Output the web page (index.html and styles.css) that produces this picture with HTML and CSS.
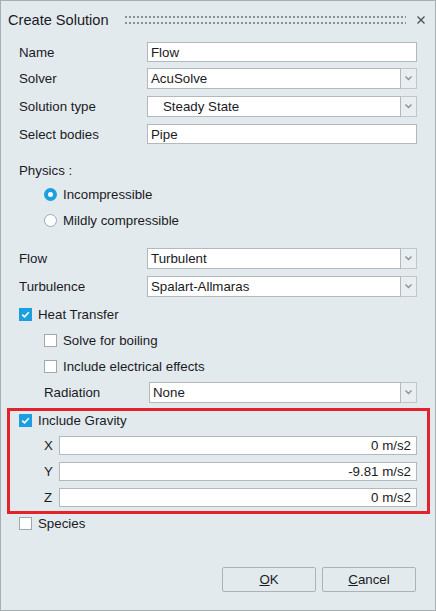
FILE: index.html
```html
<!DOCTYPE html>
<html>
<head>
<meta charset="utf-8">
<link rel="stylesheet" href="styles.css">
</head>
<body>
<div class="window">
  <div class="titlebar">
    <span class="title">Create Solution</span>
    <span class="grip"></span>
    <span class="close">
      <svg width="10" height="10" viewBox="0 0 10 10"><path d="M1.5 1.5 L8.5 8.5 M8.5 1.5 L1.5 8.5" stroke="#4a4f55" stroke-width="1.3" fill="none"/></svg>
    </span>
  </div>
  <div class="body">
    <div class="row r-name"><span class="lbl">Name</span><div class="input">Flow</div></div>
    <div class="row r-solver"><span class="lbl">Solver</span><div class="select"><div class="sel-main">AcuSolve</div><div class="sel-btn"><svg width="7" height="5" viewBox="0 0 7 5"><path d="M0.5 0.5 L3.5 3.5 L6.5 0.5" stroke="#8c9196" stroke-width="1.4" fill="none"/></svg></div></div></div>
    <div class="row r-type"><span class="lbl">Solution type</span><div class="select"><div class="sel-main indent">Steady State</div><div class="sel-btn"><svg width="7" height="5" viewBox="0 0 7 5"><path d="M0.5 0.5 L3.5 3.5 L6.5 0.5" stroke="#8c9196" stroke-width="1.4" fill="none"/></svg></div></div></div>
    <div class="row r-bodies"><span class="lbl">Select bodies</span><div class="input">Pipe</div></div>

    <div class="plain r-physics">Physics :</div>
    <div class="choice r-radio1"><span class="radio on"></span>Incompressible</div>
    <div class="choice r-radio2"><span class="radio"></span>Mildly compressible</div>

    <div class="row r-flow"><span class="lbl">Flow</span><div class="select"><div class="sel-main">Turbulent</div><div class="sel-btn"><svg width="7" height="5" viewBox="0 0 7 5"><path d="M0.5 0.5 L3.5 3.5 L6.5 0.5" stroke="#8c9196" stroke-width="1.4" fill="none"/></svg></div></div></div>
    <div class="row r-turb"><span class="lbl">Turbulence</span><div class="select"><div class="sel-main">Spalart-Allmaras</div><div class="sel-btn"><svg width="7" height="5" viewBox="0 0 7 5"><path d="M0.5 0.5 L3.5 3.5 L6.5 0.5" stroke="#8c9196" stroke-width="1.4" fill="none"/></svg></div></div></div>

    <div class="check r-heat"><span class="box on"><svg width="13" height="13" viewBox="0 0 13 13"><path d="M3.2 6.6 L5.5 8.8 L9.8 4.2" stroke="#fff" stroke-width="1.6" fill="none"/></svg></span>Heat Transfer</div>
    <div class="check sub r-boil"><span class="box"></span>Solve for boiling</div>
    <div class="check sub r-elec"><span class="box"></span>Include electrical effects</div>
    <div class="row sub r-rad"><span class="lbl rad-lbl">Radiation</span><div class="select"><div class="sel-main">None</div><div class="sel-btn"><svg width="7" height="5" viewBox="0 0 7 5"><path d="M0.5 0.5 L3.5 3.5 L6.5 0.5" stroke="#8c9196" stroke-width="1.4" fill="none"/></svg></div></div></div>

    <div class="highlight">
      <div class="check r-grav"><span class="box on"><svg width="13" height="13" viewBox="0 0 13 13"><path d="M3.2 6.6 L5.5 8.8 L9.8 4.2" stroke="#fff" stroke-width="1.6" fill="none"/></svg></span>Include Gravity</div>
      <div class="vrow r-x"><span class="vlbl">X</span><div class="input num">0 m/s2</div></div>
      <div class="vrow r-y"><span class="vlbl">Y</span><div class="input num">-9.81 m/s2</div></div>
      <div class="vrow r-z"><span class="vlbl">Z</span><div class="input num">0 m/s2</div></div>
    </div>

    <div class="check r-species"><span class="box"></span>Species</div>

    <div class="buttons">
      <button class="btn"><u>O</u>K</button>
      <button class="btn"><u>C</u>ancel</button>
    </div>
  </div>
</div>
</body>
</html>
```
FILE: styles.css
```css
html, body {
  margin: 0;
  padding: 0;
  background: #e3eaee;
}
.window {
  box-sizing: border-box;
  width: 436px;
  height: 611px;
  border: 1px solid #a9aeb3;
  background: #e3eaee;
  font-family: "Liberation Sans", Arial, sans-serif;
  font-size: 13.3px;
  color: #1a1a24;
}
.titlebar {
  height: 36px;
  display: flex;
  align-items: center;
  padding: 0 8px 0 7px;
}
.title {
  font-size: 14.6px;
  margin-top: 2px;
}
.grip {
  flex: 1;
  height: 12px;
  margin: 1px 10px 0 15px;
  background-image: radial-gradient(circle, #8b9095 0.95px, transparent 1.25px);
  background-size: 4px 6px;
  background-position: 0 0;
}
.close {
  width: 10px;
  height: 10px;
  display: flex;
  margin-right: 1px;
  margin-top: 1px;
}
.body {
  padding: 0 18px 0 18px;
  display: flex;
  flex-direction: column;
}
.row {
  display: flex;
  align-items: center;
  height: 21px;
}
.lbl {
  width: 128px;
  flex: none;
}
.input {
  flex: 1;
  box-sizing: border-box;
  height: 100%;
  background: #fff;
  border: 1px solid #b3b8bc;
  padding: 0 3px;
  display: flex;
  align-items: center;
}
.select {
  flex: 1;
  display: flex;
  height: 100%;
}
.sel-main {
  flex: 1;
  box-sizing: border-box;
  background: #fff;
  border: 1px solid #b3b8bc;
  padding: 0 3px;
  display: flex;
  align-items: center;
}
.sel-main.indent { padding-left: 15px; }
.sel-btn {
  width: 16px;
  box-sizing: border-box;
  border: 1px solid #c2c6ca;
  border-left: none;
  background: #e9eef1;
  display: flex;
  align-items: center;
  justify-content: center;
}
.r-name { margin-top: 5px; height: 20px; }
.r-solver { margin-top: 6px; }
.r-type { margin-top: 7px; }
.r-bodies { margin-top: 7px; height: 20px; }
.plain { height: 16px; line-height: 16px; }
.r-physics { margin-top: 19px; }
.choice {
  display: flex;
  align-items: center;
  height: 16px;
  padding-left: 25px;
}
.r-radio1 { margin-top: 7px; }
.r-radio2 { margin-top: 10px; }
.radio {
  box-sizing: border-box;
  width: 13px;
  height: 13px;
  border-radius: 50%;
  border: 1px solid #a2a7ac;
  background: #fff;
  margin-right: 6px;
}
.radio.on {
  border: 4px solid #1c9fe1;
  background: #fff;
}
.r-flow { margin-top: 20px; }
.r-turb { margin-top: 7px; }
.check {
  display: flex;
  align-items: center;
  height: 16px;
}
.check.sub { padding-left: 25px; }
.row.sub { padding-left: 25px; }
.box {
  box-sizing: border-box;
  width: 13px;
  height: 13px;
  border: 1px solid #a2a7ac;
  background: #fff;
  margin-right: 6px;
  display: flex;
}
.box.on {
  border: none;
  background: #1c9fe1;
}
.r-heat { margin-top: 9px; }
.r-boil { margin-top: 10px; }
.r-elec { margin-top: 10px; }
.r-rad { margin-top: 8px; }
.rad-lbl { width: 105px; }
.highlight {
  margin: 5px -13px 0 -12px;
  border: 3px solid #e4222b;
  padding: 1px 10px 3px 9px;
  display: flex;
  flex-direction: column;
  height: 106px;
  box-sizing: border-box;
}
.vrow {
  display: flex;
  align-items: center;
  height: 19px;
  padding-left: 25px;
}
.vlbl { width: 15px; flex: none; }
.input.num {
  justify-content: flex-end;
  padding-right: 5px;
}
.r-x { margin-top: 8px; }
.r-y { margin-top: 7px; }
.r-z { margin-top: 7px; }
.r-species { margin-top: 1px; }
.buttons {
  display: flex;
  justify-content: flex-end;
  gap: 6px;
  margin-top: 36px;
  padding-right: 1px;
}
.btn {
  width: 94px;
  height: 25px;
  box-sizing: border-box;
  background: #e3eaee;
  border: 1px solid #adb2b7;
  border-radius: 2px;
  font-family: "Liberation Sans", Arial, sans-serif;
  font-size: 13.3px;
  color: #1a1a24;
  padding: 0;
}
```
